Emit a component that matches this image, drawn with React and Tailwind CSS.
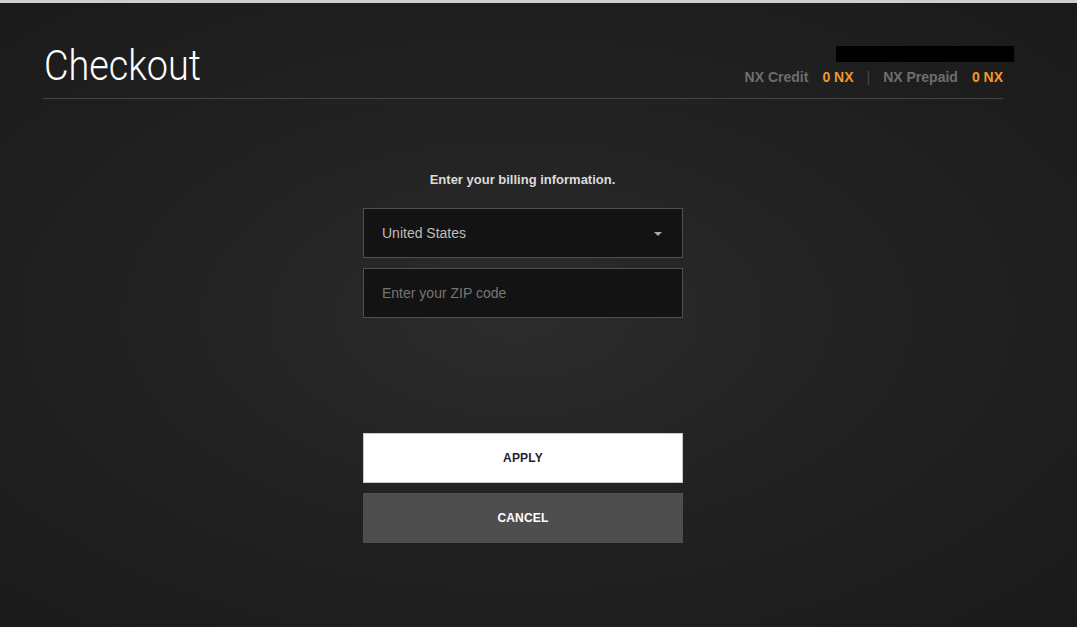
import React, { useState } from 'react';

export default function App(){
  const [zip, setZip] = useState('');
  return (
    <div className="w-[1077px] h-[627px] overflow-hidden flex flex-col" style={{fontFamily:'"Liberation Sans", Arial, sans-serif'}}>
      <div className="h-[3px] bg-[#cfcfcf] shrink-0"></div>
      <div className="flex-1 bg-[radial-gradient(ellipse_at_48%_50%,#2c2c2c_0%,#222_45%,#1a1a1a_100%)]">
        <div className="ml-[43px] w-[960px]">
          <div className="flex items-end justify-between h-[96px] border-b border-[#444]">
            <h1 className="text-[43px] leading-none text-white font-light pb-[11px] pl-[1px] scale-x-[0.88] origin-left" style={{fontFamily:'Roboto, "DejaVu Sans Condensed", sans-serif'}}>Checkout</h1>
            <div className="flex flex-col items-end pb-[14px]">
              <div className="w-[178px] h-[16px] bg-black mr-[-11px] mb-[8px]"></div>
              <div className="flex items-center text-[14px] font-bold leading-none">
                <span className="text-[#6e6e6e]">NX Credit</span>
                <span className="text-[#f0982a] ml-[14px]">0 NX</span>
                <span className="text-[#4a4a4a] font-normal mx-[13px]">|</span>
                <span className="text-[#6e6e6e]">NX Prepaid</span>
                <span className="text-[#f0982a] ml-[14px]">0 NX</span>
              </div>
            </div>
          </div>

          <div className="flex flex-col items-center pt-[74px]">
            <p className="text-[13px] font-bold text-[#dcdcdc] leading-none mr-[1px]">Enter your billing information.</p>
            <div className="w-[320px] mt-[22px] flex flex-col gap-[10px]">
              <div className="h-[50px] bg-[#131313] border border-[#4f4f4f] flex items-center justify-between pl-[18px] pr-[20px]">
                <span className="text-[14px] text-[#bdbdbd]">United States</span>
                <svg width="8" height="4" viewBox="0 0 8 4" className="mt-[2px]"><path d="M0 0h8L4 4z" fill="#aaa" /></svg>
              </div>
              <input
                value={zip}
                onChange={(e)=>setZip(e.target.value)}
                placeholder="Enter your ZIP code"
                className="h-[50px] bg-[#131313] border border-[#4f4f4f] px-[18px] text-[14px] text-[#ccc] placeholder:text-[#767676] outline-none"
              />
            </div>
            <div className="w-[320px] mt-[115px] flex flex-col gap-[10px]">
              <button className="h-[50px] bg-white border border-[#c8c8c8] text-[12px] font-bold text-[#1f2233] tracking-[0.2px]">APPLY</button>
              <button className="h-[50px] bg-[#4e4e4e] text-[12px] font-bold text-white tracking-[0.2px]">CANCEL</button>
            </div>
          </div>
        </div>
      </div>
    </div>
  );
}
